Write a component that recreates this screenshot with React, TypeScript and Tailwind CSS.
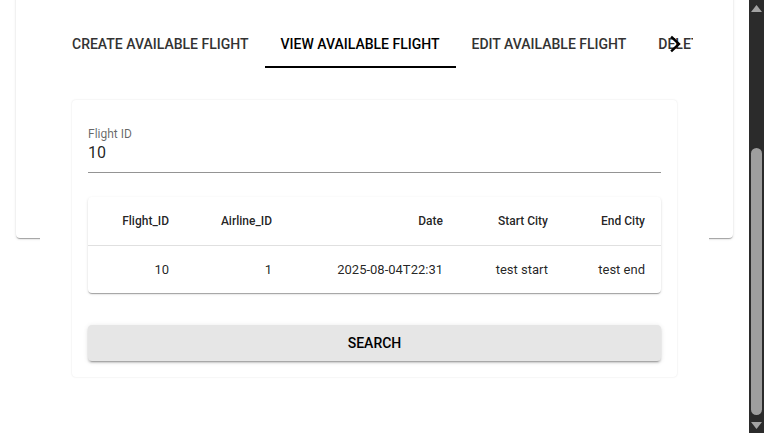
import React from "react";

const headers = ["Flight_ID", "Airline_ID", "Date", "Start City", "End City"];
const row = ["10", "1", "2025-08-04T22:31", "test start", "test end"];
const widths = ["w-[97px]", "w-[103px]", "w-[171px]", "w-[105px]", "w-[97px]"];

export default function App() {
  return (
    <div className="flex h-[433px] w-[764px] overflow-hidden bg-white font-['Roboto',sans-serif]">
      <div className="flex-1 px-4">
        <div className="-mt-[8px] h-[246px] rounded-[4px] bg-white shadow-[0_2px_1px_-1px_rgba(0,0,0,0.2),0_1px_1px_0_rgba(0,0,0,0.14),0_1px_3px_0_rgba(0,0,0,0.12)]">
          <div className="h-[28px]" />
          <div className="relative ml-[40px] flex h-[48px] w-[637px] overflow-hidden">
            <div className="flex h-[48px] shrink-0 items-center px-4 text-[14px] font-medium uppercase text-[#333333]">
              Create available flight
            </div>
            <div className="relative flex h-[48px] shrink-0 items-center px-4 text-[14px] font-medium uppercase text-black">
              View available flight
              <div className="absolute bottom-0 left-0 right-0 h-[2px] bg-black" />
            </div>
            <div className="flex h-[48px] shrink-0 items-center px-4 text-[14px] font-medium uppercase text-[#333333]">
              Edit available flight
            </div>
            <div className="flex h-[48px] w-[51px] shrink-0 items-center overflow-hidden whitespace-nowrap pl-4 text-[14px] font-medium uppercase text-[#333333]">
              Delete
            </div>
            <div className="absolute left-[612px] top-[15px]">
              <svg width="16" height="18" viewBox="0 0 16 18">
                <path d="M4 2.5 L11 9 L4 15.5" fill="none" stroke="#000" strokeWidth="2.4" strokeLinecap="square" />
              </svg>
            </div>
          </div>
          <div className="mx-6 bg-white px-8 pt-8 pb-10">
            <div className="rounded-[4px] bg-white px-4 pt-[26px] pb-4 shadow-[0_0_2px_rgba(0,0,0,0.12)]">
              <div className="border-b border-[rgba(0,0,0,0.42)] pb-[10px]">
                <div className="text-[12px] leading-[16px] text-[rgba(0,0,0,0.6)]">Flight ID</div>
                <div className="mt-[1px] text-[16px] leading-[19px] text-[rgba(0,0,0,0.87)]">10</div>
              </div>
              <div className="mt-6 overflow-hidden rounded-[4px] bg-white shadow-[0_2px_1px_-1px_rgba(0,0,0,0.2),0_1px_1px_0_rgba(0,0,0,0.14),0_1px_3px_0_rgba(0,0,0,0.12)]">
                <table className="w-full table-fixed border-collapse">
                  <thead>
                    <tr className="h-[48px] border-b border-[#e0e0e0]">
                      {headers.map((h, i) => (
                        <th key={h} className={`${widths[i]} px-4 text-right text-[12px] font-medium text-[rgba(0,0,0,0.87)]`}>
                          {h}
                        </th>
                      ))}
                    </tr>
                  </thead>
                  <tbody>
                    <tr className="h-[48px]">
                      {row.map((c, i) => (
                        <td key={i} className="px-4 text-right text-[13px] text-[rgba(0,0,0,0.87)]">
                          {c}
                        </td>
                      ))}
                    </tr>
                  </tbody>
                </table>
              </div>
              <button className="mt-8 flex h-[36px] w-full items-center justify-center rounded-[4px] bg-[#e6e6e6] text-[14px] font-medium uppercase text-black shadow-[0_3px_1px_-2px_rgba(0,0,0,0.2),0_2px_2px_0_rgba(0,0,0,0.14),0_1px_5px_0_rgba(0,0,0,0.12)]">
                Search
              </button>
            </div>
          </div>
        </div>
      </div>
      <div className="relative flex h-[433px] w-[15px] shrink-0 flex-col items-center bg-[#2b2b2b]">
        <svg className="mt-[5px]" width="11" height="7" viewBox="0 0 11 7">
          <path d="M5.5 0 L11 7 L0 7 Z" fill="#a3a3a3" />
        </svg>
        <div className="mt-[136px] h-[267px] w-[11px] rounded-[6px] bg-[#9e9e9e]" />
        <svg className="mt-[7px]" width="11" height="7" viewBox="0 0 11 7">
          <path d="M0 0 L11 0 L5.5 7 Z" fill="#a3a3a3" />
        </svg>
      </div>
    </div>
  );
}
